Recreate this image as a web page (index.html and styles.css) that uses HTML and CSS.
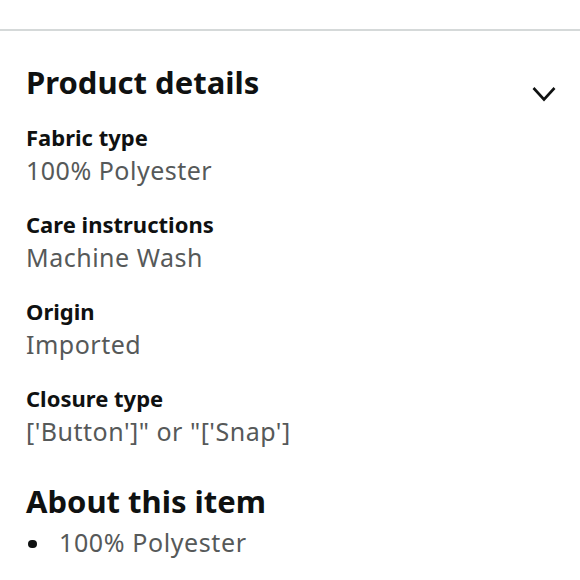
FILE: index.html
```html
<!DOCTYPE html>
<html>
<head>
<meta charset="utf-8">
<link rel="stylesheet" href="styles.css">
</head>
<body>
<div class="page">
  <div class="divider"></div>
  <section class="details">
    <div class="head">
      <h2 class="title">Product details</h2>
      <svg class="chev" width="24" height="16" viewBox="0 0 24 16"><path d="M1.5 2 L12 13.5 L22.5 2" fill="none" stroke="#0f1111" stroke-width="2.6"/></svg>
    </div>
    <div class="item"><div class="label">Fabric type</div><div class="value">100% Polyester</div></div>
    <div class="item"><div class="label">Care instructions</div><div class="value">Machine Wash</div></div>
    <div class="item"><div class="label">Origin</div><div class="value">Imported</div></div>
    <div class="item"><div class="label">Closure type</div><div class="value">['Button']" or "['Snap']</div></div>
  </section>
  <section class="about">
    <h2 class="title">About this item</h2>
    <ul class="bullets"><li>100% Polyester</li></ul>
  </section>
</div>
</body>
</html>
```
FILE: styles.css
```css
html, body { margin: 0; padding: 0; background: #fff; }
body { font-family: "Noto Sans", "Open Sans", sans-serif; color: #0f1111; }
.page { width: 580px; height: 580px; overflow: hidden; }
.divider { margin-top: 29px; height: 2px; background: #d5d9d9; }
.details { padding: 30.5px 26px 0; }
.head { display: flex; justify-content: space-between; align-items: flex-end; }
.title { margin: 0; font-size: 31px; font-weight: 700; line-height: 40px; }
.chev { margin-right: -1.5px; margin-bottom: -0.5px; }
.item { margin-top: 22px; }
.label { font-size: 22px; font-weight: 700; line-height: 27px; }
.value { font-size: 25px; color: #565959; line-height: 38px; letter-spacing: 0.5px; }
.about { padding: 0 26px; margin-top: 31.5px; }
.bullets { margin: 3px 0 0; padding: 0; list-style: none; }
.bullets li { position: relative; padding-left: 33px; font-size: 25px; color: #565959; line-height: 37px; letter-spacing: 0.6px; }
.bullets li::before { content: ""; position: absolute; left: 2px; top: 15.5px; width: 8.5px; height: 8.5px; border-radius: 50%; background: #0f1111; }
```
